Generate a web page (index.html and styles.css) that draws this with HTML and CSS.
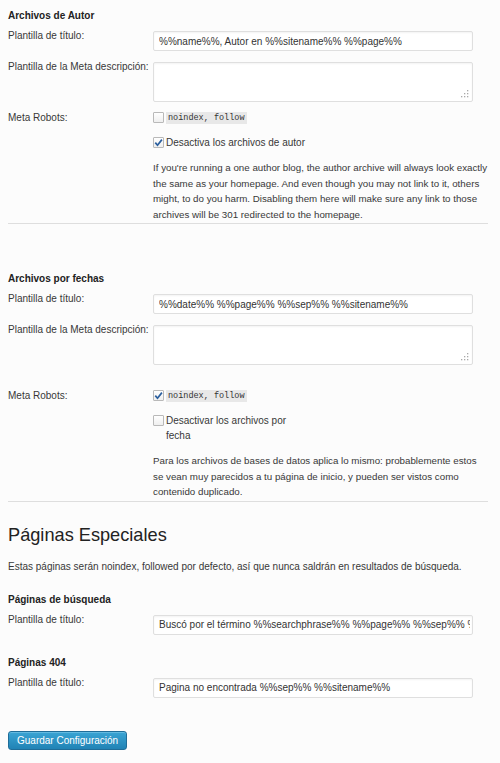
FILE: index.html
```html
<!DOCTYPE html>
<html lang="es">
<head>
<meta charset="utf-8">
<title>Títulos y Metas</title>
<link rel="stylesheet" href="styles.css">
</head>
<body>
<div class="page">
  <section class="block">
    <h3 class="block-title">Archivos de Autor</h3>
    <div class="row row-first">
      <label class="row-label" for="author-title">Plantilla de título:</label>
      <div class="row-field"><input class="text-input" id="author-title" type="text" value="%%name%%, Autor en %%sitename%% %%page%%"></div>
    </div>
    <div class="row">
      <label class="row-label" for="author-desc">Plantilla de la Meta descripción:</label>
      <div class="row-field">
        <div class="area-wrap">
          <textarea class="text-area" id="author-desc"></textarea>
          <svg class="grip" width="9" height="9" viewBox="0 0 9 9"><g fill="#a9a9a9"><rect x="7" y="1" width="1.3" height="1.3"/><rect x="7" y="4" width="1.3" height="1.3"/><rect x="7" y="7" width="1.3" height="1.3"/><rect x="4" y="4" width="1.3" height="1.3"/><rect x="4" y="7" width="1.3" height="1.3"/><rect x="1" y="7" width="1.3" height="1.3"/></g></svg>
        </div>
      </div>
    </div>
    <div class="row">
      <div class="row-label">Meta Robots:</div>
      <div class="row-field row-field-flush">
        <div class="check"><span class="box"></span><code class="code">noindex, follow</code></div>
        <div class="check check-option"><span class="box"><svg width="9" height="9" viewBox="0 0 9 9"><path d="M1.3 4.6 L3.5 7.2 L7.9 1.6" fill="none" stroke="#2b5f9e" stroke-width="1.7"/></svg></span><span class="check-text">Desactiva los archivos de autor</span></div>
        <p class="desc desc-wide">If you're running a one author blog, the author archive will always look exactly the same as your homepage. And even though you may not link to it, others might, to do you harm. Disabling them here will make sure any link to those archives will be 301 redirected to the homepage.</p>
      </div>
    </div>
  </section>

  <section class="block block-next">
    <h3 class="block-title">Archivos por fechas</h3>
    <div class="row row-first">
      <label class="row-label" for="date-title">Plantilla de título:</label>
      <div class="row-field"><input class="text-input" id="date-title" type="text" value="%%date%% %%page%% %%sep%% %%sitename%%"></div>
    </div>
    <div class="row">
      <label class="row-label" for="date-desc">Plantilla de la Meta descripción:</label>
      <div class="row-field">
        <div class="area-wrap">
          <textarea class="text-area" id="date-desc"></textarea>
          <svg class="grip" width="9" height="9" viewBox="0 0 9 9"><g fill="#a9a9a9"><rect x="7" y="1" width="1.3" height="1.3"/><rect x="7" y="4" width="1.3" height="1.3"/><rect x="7" y="7" width="1.3" height="1.3"/><rect x="4" y="4" width="1.3" height="1.3"/><rect x="4" y="7" width="1.3" height="1.3"/><rect x="1" y="7" width="1.3" height="1.3"/></g></svg>
        </div>
      </div>
    </div>
    <div class="row row-spaced">
      <div class="row-label">Meta Robots:</div>
      <div class="row-field row-field-flush">
        <div class="check"><span class="box"><svg width="9" height="9" viewBox="0 0 9 9"><path d="M1.3 4.6 L3.5 7.2 L7.9 1.6" fill="none" stroke="#2b5f9e" stroke-width="1.7"/></svg></span><code class="code">noindex, follow</code></div>
        <div class="check check-option"><span class="box"></span><span class="check-text">Desactivar los archivos por fecha</span></div>
        <p class="desc desc-narrow">Para los archivos de bases de datos aplica lo mismo: probablemente estos se vean muy parecidos a tu página de inicio, y pueden ser vistos como contenido duplicado.</p>
      </div>
    </div>
  </section>

  <section class="special">
    <h2 class="special-title">Páginas Especiales</h2>
    <p class="special-intro">Estas páginas serán noindex, followed por defecto, así que nunca saldrán en resultados de búsqueda.</p>

    <h3 class="block-title sub-title">Páginas de búsqueda</h3>
    <div class="row row-first">
      <label class="row-label" for="search-title">Plantilla de título:</label>
      <div class="row-field"><input class="text-input" id="search-title" type="text" value="Buscó por el término %%searchphrase%% %%page%% %%sep%% %%sitename%%"></div>
    </div>

    <h3 class="block-title sub-title sub-title-404">Páginas 404</h3>
    <div class="row row-first">
      <label class="row-label" for="notfound-title">Plantilla de título:</label>
      <div class="row-field"><input class="text-input" id="notfound-title" type="text" value="Pagina no encontrada %%sep%% %%sitename%%"></div>
    </div>

    <div class="actions">
      <button class="button-primary" type="button">Guardar Configuración</button>
    </div>
  </section>
</div>
</body>
</html>
```

FILE: styles.css
```css
html {
  background: #fcfcfc;
}

body {
  margin: 8px;
  font-family: "Liberation Sans", Arial, sans-serif;
  font-size: 10px;
  line-height: 15px;
  color: #383838;
  background: #fcfcfc;
}

.page {
  width: 480px;
}

.block {
  border-bottom: 1px solid #dedede;
  padding-bottom: 1px;
}

.block-next {
  margin-top: 47px;
}

.block-title {
  margin: 0;
  font-size: 10px;
  line-height: 15px;
  font-weight: bold;
  color: #222;
}

.row {
  display: flex;
  align-items: flex-start;
  margin-top: 8px;
}

.row-first {
  margin-top: 5px;
}

.row-spaced {
  margin-top: 23px;
}

.row-label {
  flex: 0 0 145px;
}

.row-field {
  flex: 1 1 auto;
  min-width: 0;
  padding-top: 3px;
}

.row-field-flush {
  padding-top: 0;
}

.text-input {
  display: block;
  box-sizing: border-box;
  width: 320px;
  height: 20px;
  margin: 0;
  padding: 0 2px 0 5px;
  border: 1px solid #dfdfdf;
  border-radius: 2px;
  background: #fff;
  box-shadow: inset 0 1px 2px rgba(0, 0, 0, 0.05);
  font-family: "Liberation Sans", Arial, sans-serif;
  font-size: 10px;
  color: #333;
  outline: none;
}

.area-wrap {
  position: relative;
  width: 320px;
  height: 40px;
}

.text-area {
  display: block;
  box-sizing: border-box;
  width: 320px;
  height: 40px;
  margin: 0;
  padding: 3px 5px;
  border: 1px solid #dfdfdf;
  border-radius: 2px;
  background: #fff;
  box-shadow: inset 0 1px 2px rgba(0, 0, 0, 0.05);
  resize: none;
  font-family: "Liberation Sans", Arial, sans-serif;
  font-size: 10px;
  outline: none;
}

.grip {
  position: absolute;
  right: 4px;
  bottom: 4px;
}

.check {
  display: flex;
  align-items: flex-start;
  gap: 2px;
  line-height: 15px;
}

.check-option {
  margin-top: 11px;
}

.box {
  flex: 0 0 auto;
  box-sizing: border-box;
  width: 11px;
  height: 11px;
  margin-top: 2px;
  border: 1px solid #b9b9b9;
  border-radius: 1px;
  background: linear-gradient(#ffffff, #efefef);
  display: flex;
  align-items: center;
  justify-content: center;
}

.code {
  display: block;
  margin-top: 1.5px;
  padding: 0 2px;
  height: 12px;
  line-height: 12px;
  background: #e8e8e8;
  font-family: "Liberation Mono", "Courier New", monospace;
  font-size: 8.5px;
  color: #333;
}

.check-text {
  max-width: 143px;
}

.desc {
  margin: 10.5px 0 0;
  font-size: 9.75px;
  line-height: 15.5px;
}

.desc-wide {
  max-width: 340px;
}

.desc-narrow {
  max-width: 330px;
}

.special {
  margin-top: 22px;
}

.special-title {
  margin: 0;
  font-size: 18.2px;
  line-height: 22px;
  font-weight: normal;
  color: #222;
}

.special-intro {
  margin: 13px 0 0;
  font-size: 10px;
  line-height: 15px;
}

.sub-title {
  margin-top: 18px;
}

.sub-title-404 {
  margin-top: 20px;
}

.actions {
  margin-top: 33.5px;
}

.button-primary {
  display: block;
  box-sizing: border-box;
  height: 19px;
  margin: 0;
  padding: 0 8px;
  border: 1px solid #1f6d99;
  border-radius: 3px;
  background: linear-gradient(#3aa4d4, #2183b5);
  box-shadow: inset 0 1px 0 rgba(140, 210, 240, 0.5);
  font-family: "Liberation Sans", Arial, sans-serif;
  font-size: 10px;
  line-height: 17px;
  color: #fff;
  cursor: pointer;
}
```
